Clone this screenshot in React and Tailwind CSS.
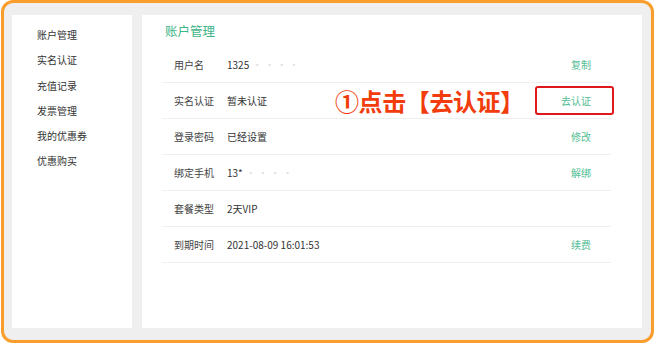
export default function App() {
  const font = { fontFamily: '"Noto Sans CJK SC", "Noto Sans", sans-serif' };
  const menu = ["账户管理", "实名认证", "充值记录", "发票管理", "我的优惠券", "优惠购买"];
  const rows = [
    { label: "用户名", value: "1325", faint: "·  ·   ·  ·", action: "复制" },
    { label: "实名认证", value: "暂未认证", action: "去认证", mark: true },
    { label: "登录密码", value: "已经设置", action: "修改" },
    { label: "绑定手机", value: "13*", faint: "·  ·  ·  ·", action: "解绑" },
    { label: "套餐类型", value: "2天VIP", action: "" },
    { label: "到期时间", value: "2021-08-09 16:01:53", action: "续费" },
  ];
  return (
    <div className="w-[656px] h-[344px] bg-white" style={font}>
      <div className="ml-[1px] w-[653px] h-[343px] border-[3px] border-[#f99d2d] rounded-[12px] bg-[#efefef] flex gap-[10px] pl-[8px] pr-[9px] pt-[12px] pb-[12px]">
        <div className="w-[120px] bg-white pt-[7px] pl-[25px]">
          {menu.map((m) => (
            <div key={m} className="h-[25.3px] leading-[25px] text-[10px] text-[#333]">
              {m}
            </div>
          ))}
        </div>
        <div className="flex-1 bg-white">
          <div className="h-[32px] pl-[23px] leading-[32px] text-[12.5px] text-[#3db487]">账户管理</div>
          <div className="ml-[20px] mr-[31px]">
            {rows.map((r) => (
              <div key={r.label} className="relative h-[36px] border-b border-[#efefef] flex items-center pl-[12px] pr-[20px] text-[10px]">
                <div className="w-[53px] text-[#444]">{r.label}</div>
                <div className="text-[#333]">
                  {r.value}
                  {r.faint && <span className="ml-[3px] text-[#ddd]">{r.faint}</span>}
                </div>
                <div className="ml-auto text-[#52bd94]">{r.action}</div>
                {r.mark && (
                  <>
                    <div className="absolute left-[173px] top-[5px] text-[24px] leading-[26px] font-bold text-[#f23c0c] whitespace-nowrap tracking-[-0.4px]">
                      ①点击【去认证】
                    </div>
                    <div className="absolute right-[-3px] top-[3px] w-[79px] h-[29px] border-2 border-[#e0181c] rounded-[3px]"></div>
                  </>
                )}
              </div>
            ))}
          </div>
        </div>
      </div>
    </div>
  );
}
